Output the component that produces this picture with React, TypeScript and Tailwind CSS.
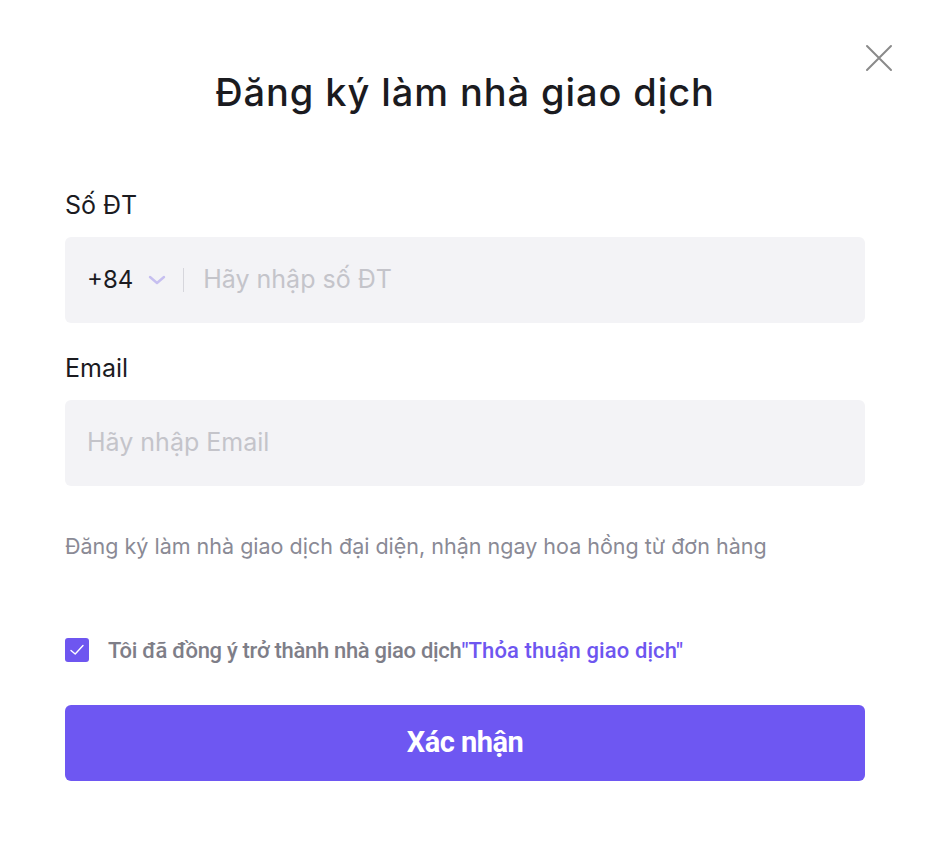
import React from "react";

export default function App() {
  return (
    <div className="w-[930px] h-[848px] bg-white relative" style={{ fontFamily: "Inter, 'Noto Sans', sans-serif" }}>
      <button className="absolute left-[864px] top-[43px] w-[30px] h-[30px] flex items-center justify-center">
        <svg width="28" height="28" viewBox="0 0 28 28" fill="none" stroke="#8a8a8a" strokeWidth="2" strokeLinecap="round">
          <path d="M2 2 L26 26 M26 2 L2 26" />
        </svg>
      </button>
      <div className="px-[65px] pt-[70px] flex flex-col">
        <h1 className="text-center text-[38px] leading-[44px] text-[#1b1b1f] font-medium tracking-[0.9px]">Đăng ký làm nhà giao dịch</h1>
        <div className="mt-[76px] text-[25px] leading-[30px] text-[#1b1b1f]">Số ĐT</div>
        <div className="mt-[17px] h-[86px] rounded-[6px] bg-[#f3f3f6] flex items-center pl-[22px]">
          <span className="text-[24px] text-[#1b1b1f]">+84</span>
          <svg className="ml-[14px]" width="20" height="12" viewBox="0 0 20 12" fill="none" stroke="#c6bff0" strokeWidth="2.4" strokeLinecap="round" strokeLinejoin="round">
            <path d="M3 3 L10 9 L17 3" />
          </svg>
          <div className="ml-[16px] w-px h-[24px] bg-[#d6d6dc]" />
          <span className="ml-[19px] text-[25px] text-[#c4c4ca]">Hãy nhập số ĐT</span>
        </div>
        <div className="mt-[30px] text-[25px] leading-[30px] text-[#1b1b1f]">Email</div>
        <div className="mt-[17px] h-[86px] rounded-[6px] bg-[#f3f3f6] flex items-center pl-[22px]">
          <span className="text-[25px] text-[#c4c4ca]">Hãy nhập Email</span>
        </div>
        <div className="mt-[45px] text-[21.5px] leading-[30px] text-[#8a8a95]">Đăng ký làm nhà giao dịch đại diện, nhận ngay hoa hồng từ đơn hàng</div>
        <div className="mt-[74px] h-[30px] flex items-center">
          <div className="w-[24px] h-[24px] rounded-[3px] bg-[#6e56f0] flex items-center justify-center">
            <svg width="18" height="18" viewBox="0 0 18 18" fill="none" stroke="white" strokeWidth="1.4" strokeLinecap="round" strokeLinejoin="round">
              <path d="M3 9.5 L7.2 13 L15 4.5" />
            </svg>
          </div>
          <div className="ml-[19px] text-[22px] font-medium" style={{ fontFamily: "Roboto, sans-serif" }}>
            <span className="text-[#7e7e88] tracking-[-0.3px]">Tôi đã đồng ý trở thành nhà giao dịch</span>
            <span className="text-[#6e56f0] tracking-[0.1px]">"Thỏa thuận giao dịch"</span>
          </div>
        </div>
        <button className="mt-[40px] h-[76px] rounded-[6px] bg-[#6e57f2] text-white text-[29px] font-bold tracking-[-0.5px]" style={{ fontFamily: "Roboto, sans-serif" }}>
          Xác nhận
        </button>
      </div>
    </div>
  );
}
